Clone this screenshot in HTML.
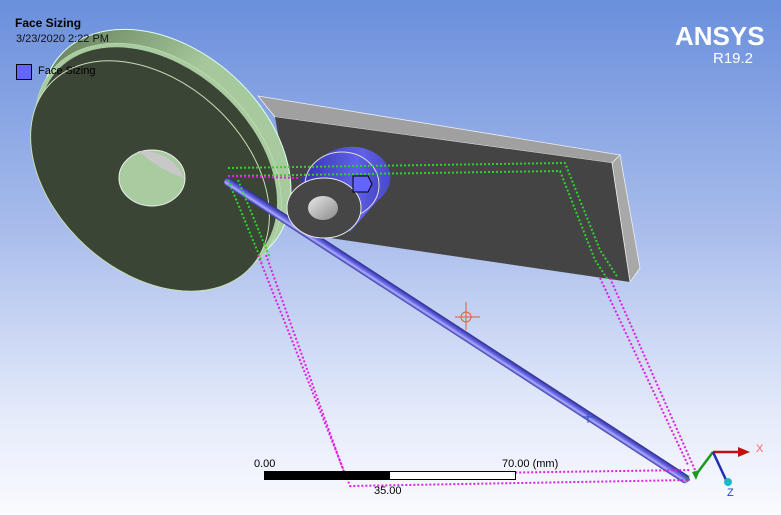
<!DOCTYPE html>
<html><head><meta charset="utf-8"><style>
html,body{margin:0;padding:0;width:781px;height:515px;overflow:hidden}
body{background:linear-gradient(#6a8fdc 0%,#a9bdec 45%,#e4eafa 80%,#fafbff 100%);font-family:"Liberation Sans",sans-serif;position:relative}
svg{position:absolute;left:0;top:0}
.t{position:absolute;color:#000}
</style></head><body>
<svg width="781" height="515" viewBox="0 0 781 515">
<defs>
<linearGradient id="rim" x1="0" y1="0" x2="1" y2="0"><stop offset="0" stop-color="#6f8a66"/><stop offset=".4" stop-color="#a6c89c"/><stop offset="1" stop-color="#a8cba0"/></linearGradient>
<linearGradient id="cyl" x1="0" y1="0" x2="1" y2="0"><stop offset="0" stop-color="#3535b0"/><stop offset=".7" stop-color="#6060e8"/><stop offset="1" stop-color="#4848c8"/></linearGradient>
<linearGradient id="hg" x1="0" y1="0" x2="1" y2="1"><stop offset="0" stop-color="#e8e8e8"/><stop offset="1" stop-color="#8a8a8a"/></linearGradient>
<linearGradient id="shaft" x1="0" y1="0" x2="0" y2="1"><stop offset="0" stop-color="#2a2a90"/><stop offset=".5" stop-color="#7070f0"/><stop offset=".7" stop-color="#b0b0ff"/><stop offset="1" stop-color="#3030a0"/></linearGradient>
</defs>
<!-- plate -->
<polygon points="258,96 620,155 612,163 275,117" fill="#a0a0a0" stroke="#eee" stroke-width=".8"/>
<polygon points="275,117 612,163 630,282 330,238 290,200" fill="#444"/>
<polygon points="612,163 620,155 640,268 630,282" fill="#a8a8a8" stroke="#eee" stroke-width=".8"/>
<!-- pulley -->
<ellipse cx="166" cy="150" rx="142" ry="100" transform="rotate(42 166 150)" fill="url(#rim)" stroke="#dfe" stroke-width="1"/>
<ellipse cx="158" cy="162" rx="140" ry="98" transform="rotate(42 158 162)" fill="#3b4536" stroke="#cfe8c0" stroke-width="1"/>
<ellipse cx="158" cy="162" rx="138" ry="96" transform="rotate(42 158 162)" fill="none" stroke="#a8cba0" stroke-width="4"/>
<ellipse cx="150" cy="176" rx="136" ry="95" transform="rotate(42 150 176)" fill="#3b4536" stroke="#c8e0b8" stroke-width="1"/>
<ellipse cx="152" cy="178" rx="33" ry="28" fill="#a8cba0" stroke="#eee"/>
<path d="M138,151 Q172,150 184,178 Q160,170 138,151Z" fill="#c8c8c8"/>
<!-- shaft -->
<g transform="translate(225,180) rotate(33)"><rect x="0" y="-4.5" width="553" height="9" rx="4.5" fill="url(#shaft)"/></g>
<!-- cylinder -->
<path d="M300,180 L325,155 A38,30 0 0 1 378,200 L350,232 Z" fill="url(#cyl)"/>
<ellipse cx="342" cy="185" rx="37" ry="33" fill="url(#cyl)" stroke="#ddd"/>
<path d="M287,208 A37,30 0 1 0 361,208 A37,30 0 1 0 287,208 Z" fill="rgb(70,70,70)" stroke="#eee"/>
<path d="M308,208 A15,12 0 1 0 338,208 A15,12 0 1 0 308,208 Z" fill="url(#hg)"/>
<polygon points="353,176 368,176 372,184 368,192 353,192" fill="#6464ff" stroke="#000"/>
<!-- dotted lines -->
<g fill="none" stroke="#30d030" stroke-width="2" stroke-dasharray="2,2">
<path d="M228,168 L565,163 L600,250 L618,278"/><path d="M228,176 L560,171 L595,260 L608,280"/>
<path d="M228,180 L262,262"/><path d="M238,180 L270,258"/>
<path d="M340,478 L380,478"/>
</g>
<g fill="none" stroke="#e020e0" stroke-width="2" stroke-dasharray="2,2">
<path d="M228,176 L300,178"/><path d="M258,255 L350,486 L690,480"/><path d="M266,255 L345,475 L690,470"/>
<path d="M600,278 L688,465"/><path d="M610,278 L695,470"/>
</g>
<!-- crosshair -->
<g stroke="#e06030" stroke-width="1" fill="none"><circle cx="466" cy="317" r="5"/><path d="M455,317H480M466,302V330"/></g>
<path d="M582,417H594M588,411V423" stroke="#3050c0"/>
<!-- scale bar -->
<rect x="264.5" y="471.5" width="251" height="8" fill="#fff" stroke="#000"/>
<rect x="264" y="471" width="126" height="9" fill="#000"/>
<!-- triad -->
<g stroke-width="2.5"><path d="M695,476 L713,452" stroke="#1a9a1a"/><path d="M713,452 L740,452" stroke="#c01010"/><path d="M713,452 L727,482" stroke="#2030b0"/></g>
<polygon points="738,447 750,452 738,457" fill="#c01010"/>
<polygon points="692,472 700,470 696,480" fill="#1a9a1a"/>
<circle cx="728" cy="482" r="4" fill="#20b8c8"/>
<text x="756" y="452" font-size="11" fill="#ff6060" font-family="Liberation Sans">X</text>
<text x="727" y="496" font-size="11" fill="#2040e0" font-family="Liberation Sans">Z</text>
<text x="684" y="482" font-size="9" fill="#1a9a1a" font-family="Liberation Sans">Y</text>
</svg>
<div class="t" style="left:15px;top:16px;font-size:12px;font-weight:bold">Face Sizing</div>
<div class="t" style="left:16px;top:33px;font-size:11px;color:#111">3/23/2020 2:22 PM</div>
<div style="position:absolute;left:16px;top:64px;width:14px;height:14px;background:#6464ff;border:1px solid #000"></div>
<div class="t" style="left:38px;top:65px;font-size:11px">Face Sizing</div>
<div class="t" style="left:675px;top:21px;font-size:26px;font-weight:bold;color:#fff">ANSYS</div>
<div class="t" style="left:713px;top:50px;font-size:15px;color:#fff">R19.2</div>
<div class="t" style="left:254px;top:458px;font-size:11px">0.00</div>
<div class="t" style="left:502px;top:458px;font-size:11px">70.00 (mm)</div>
<div class="t" style="left:374px;top:485px;font-size:11px">35.00</div>
</body></html>
